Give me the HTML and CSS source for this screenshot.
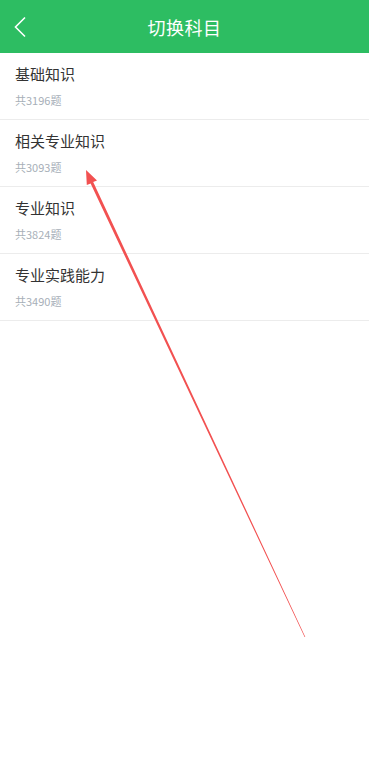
FILE: index.html
```html
<html>
    <head>
        <title>切换科目</title>
        <link rel="stylesheet" href="styles.css">
    </head>
    <body>
        <div class="header">
            <a class="back" href="#"><svg width="14" height="22" viewBox="0 0 14 22"><path d="M12 1.5 L2.5 11 L12 20.5" fill="none" stroke="#fff" stroke-width="1.6"/></svg></a>
            <div class="title">切换科目</div>
        </div>
        <div class="list">
            <div class="row"><div class="name">基础知识</div><div class="count">共3196题</div></div>
            <div class="row"><div class="name">相关专业知识</div><div class="count">共3093题</div></div>
            <div class="row"><div class="name">专业知识</div><div class="count">共3824题</div></div>
            <div class="row"><div class="name">专业实践能力</div><div class="count">共3490题</div></div>
        </div>
        <svg class="pointer" width="369" height="775" viewBox="0 0 369 775">
            <polygon points="86,170 97,180.5 93.2,182 305.3,637 304.6,637 90.6,183.5 86.8,185" fill="#f25151"/>
        </svg>
    </body>
</html>
```

FILE: styles.css
```css
body {
    margin: 0;
    font-family: "Noto Sans CJK SC", "Noto Sans", sans-serif;
    background: #fff;
}
.header {
    height: 53px;
    background: #2dbd62;
    display: flex;
    align-items: center;
    justify-content: center;
    position: relative;
}
.back {
    position: absolute;
    left: 13px;
    top: 16px;
    display: block;
    line-height: 0;
}
.title {
    color: #fff;
    font-size: 18px;
    letter-spacing: 0.5px;
}
.row {
    height: 66px;
    padding: 0 15px;
    border-bottom: 1px solid #ececec;
    box-sizing: content-box;
}
.name {
    padding-top: 11px;
    font-size: 15px;
    line-height: 20px;
    color: #333;
}
.count {
    margin-top: 9px;
    font-size: 11px;
    line-height: 14px;
    color: #a7afb8;
}
.pointer {
    position: absolute;
    left: 0;
    top: 0;
}
```
